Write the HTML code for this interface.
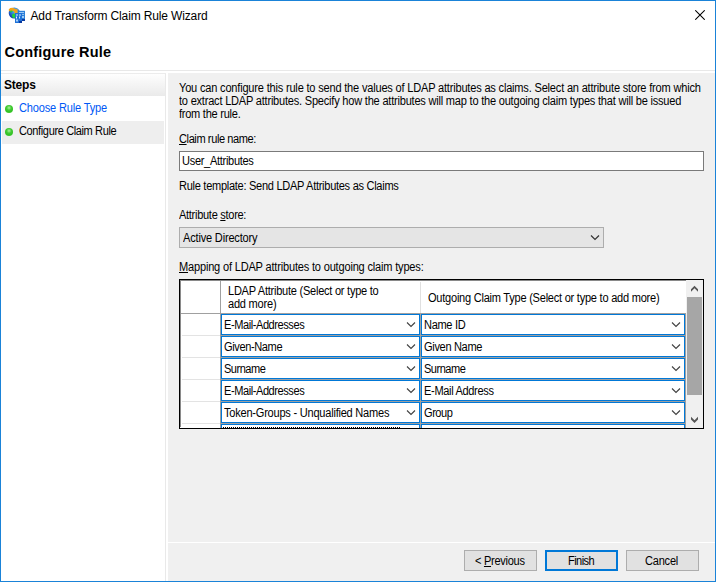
<!DOCTYPE html>
<html><head><meta charset="utf-8">
<style>
*{box-sizing:border-box;margin:0;padding:0}
html,body{width:716px;height:582px;overflow:hidden;background:#fff}
body{position:relative;font-family:"Liberation Sans",sans-serif;font-size:11.5px;color:#000;letter-spacing:-0.45px}
.a{position:absolute}
.t{position:absolute;white-space:nowrap;line-height:13px;height:13px;font-size:12px;transform:scaleX(0.92);transform-origin:0 0}
.t.n{transform:none}
.u{text-decoration:underline;text-underline-offset:1px}
#win{position:absolute;left:0;top:0;width:716px;height:582px;border:1px solid #1a83d8}
#sep1{left:1px;top:70px;width:714px;height:1px;background:#e8e8e8}
#left{left:1px;top:73px;width:165px;height:508px;background:#fff;border-right:1px solid #e9e9e9;border-top:1px solid #ececec}
#stepsh{left:1px;top:74px;width:164px;height:22px;background:linear-gradient(#fefefe,#f5f5f5 45%,#eaeaea)}
#hl{left:2px;top:121px;width:162px;height:23px;background:#eeeeee}
.dot{position:absolute;width:8px;height:8px;border-radius:50%;background:radial-gradient(circle at 50% 35%,#b0f0a0 0,#44cc36 35%,#34c026 60%,#40d030 85%,#56dc46 100%)}
#right{left:168px;top:73px;width:547px;height:469px;background:#f0f0f0}
#sep2{left:168px;top:542px;width:547px;height:1px;background:#fff}
#bottom{left:168px;top:543px;width:547px;height:38px;background:#f0f0f0}
.tb{position:absolute;background:#fff;border:1px solid #7a7a7a}
.dd{position:absolute;background:#e5e5e5;border:1px solid #adadad}
.btn{position:absolute;background:#e1e1e1;border:1px solid #adadad;height:21px;width:73px}
.btn.def{border:2px solid #0078d7}
.chev{position:absolute}
#grid{left:179px;top:279px;width:525px;height:150px;background:#fff}
#gridb{left:179px;top:279px;width:525px;height:150px;border:1px solid #000}
#gridi{left:180px;top:280px;width:506px;height:147px;border-left:1px solid #8a8a8a;border-top:1px solid #8a8a8a}
.cb{position:absolute;background:#fff;border:1px solid #0078d7;height:21px}
.gl{position:absolute;background:#a0a0a0}
</style></head><body>
<div id="win"></div>
<!-- title bar -->
<svg class="a" style="left:7px;top:5px" width="20" height="20" viewBox="0 0 20 20">
  <defs><radialGradient id="gl" cx="0.55" cy="0.3" r="0.75"><stop offset="0" stop-color="#5cc4f5"/><stop offset="0.5" stop-color="#2a78d8"/><stop offset="1" stop-color="#0a2aa0"/></radialGradient></defs>
  <circle cx="7.3" cy="8" r="5.6" fill="url(#gl)"/>
  <ellipse cx="7" cy="10.8" rx="2" ry="2.2" fill="#1ed23c"/>
  <ellipse cx="4.3" cy="6" rx="1.3" ry="1.2" fill="#2ccd3c"/>
  <path d="M1.8 4.2 Q3.5 2.6 6 2.9 Q8 3.3 9 4.6 L10.4 3.6 L10.6 8.6 L6.6 8.4 L7.8 7.3 Q6.5 5.8 4.6 5.6 Q3 5.6 1.9 6.6 Z" fill="#f4a417"/>
  <rect x="11" y="5.8" width="7" height="10.2" fill="#2b7fd8"/>
  <rect x="12" y="7" width="5" height="1" fill="#9cc8f5"/>
  <rect x="14" y="9" width="3" height="1" fill="#8fc0f0"/>
  <rect x="15" y="11" width="2" height="2" fill="#9ccaf5"/>
  <rect x="15" y="14" width="3" height="2" fill="#0a3aa0"/>
  <rect x="8" y="8" width="7" height="10" fill="#1f72d8"/>
  <rect x="9" y="9.5" width="2" height="1" fill="#d8ecff"/><rect x="12" y="9.5" width="2" height="1" fill="#d8ecff"/>
  <rect x="9" y="11.5" width="1" height="2" fill="#e8f4ff"/><rect x="12" y="11.5" width="1" height="2" fill="#c8e2ff"/>
  <rect x="9" y="14.5" width="2" height="2" fill="#a8d0f8"/>
  <rect x="12" y="16" width="3" height="2" fill="#0a3aa0"/>
</svg>
<div class="t n" style="left:30.5px;top:10px;font-size:12px;letter-spacing:-0.14px">Add Transform Claim Rule Wizard</div>
<svg class="a" style="left:695px;top:10px" width="10" height="10" viewBox="0 0 10 10"><path d="M0.3 0.3 L9.7 9.7 M9.7 0.3 L0.3 9.7" stroke="#000" stroke-width="1.05"/></svg>
<div class="t n" style="left:4.5px;top:44px;font-size:14.5px;font-weight:bold;letter-spacing:0.2px;line-height:17px;height:17px">Configure Rule</div>
<div class="a" id="sep1"></div>

<!-- left pane -->
<div class="a" id="left"></div>
<div class="a" id="stepsh"></div>
<div class="t n" style="left:4px;top:79px;font-size:12px;font-weight:bold;letter-spacing:-0.2px">Steps</div>
<div class="dot" style="left:5px;top:105px"></div>
<div class="t" style="left:18.7px;top:102px;color:#0058f5;letter-spacing:-0.18px">Choose Rule Type</div>
<div class="a" id="hl"></div>
<div class="dot" style="left:5px;top:128px"></div>
<div class="t" style="left:18.7px;top:125px;letter-spacing:-0.414px">Configure Claim Rule</div>

<!-- right pane -->
<div class="a" id="right"></div>
<div class="a" id="sep2"></div>
<div class="a" id="bottom"></div>

<div class="t" style="left:179px;top:82px;letter-spacing:-0.206px">You can configure this rule to send the values of LDAP attributes as claims. Select an attribute store from which</div>
<div class="t" style="left:179px;top:95px;letter-spacing:-0.231px">to extract LDAP attributes. Specify how the attributes will map to the outgoing claim types that will be issued</div>
<div class="t" style="left:179px;top:108px;letter-spacing:-0.279px">from the rule.</div>

<div class="t" style="left:179px;top:133px;letter-spacing:-0.437px"><span class="u">C</span>laim rule name:</div>
<div class="tb" style="left:179px;top:151px;width:525px;height:20px"></div>
<div class="t" style="left:181.9px;top:155px;letter-spacing:-0.33px">User_Attributes</div>

<div class="t" style="left:179px;top:180px;letter-spacing:-0.31px">Rule template: Send LDAP Attributes as Claims</div>

<div class="t" style="left:179px;top:209px;letter-spacing:-0.317px">Attribute <span class="u">s</span>tore:</div>
<div class="dd" style="left:179px;top:227px;width:425px;height:21px"></div>
<div class="t" style="left:182.6px;top:232px;letter-spacing:-0.2px">Active Directory</div>
<svg class="a" style="left:590px;top:234px" width="10" height="7" viewBox="0 0 10 7"><path d="M1 1.5 L5 5.5 L9 1.5" fill="none" stroke="#333" stroke-width="1.2"/></svg>

<div class="t" style="left:179px;top:261px;letter-spacing:-0.199px"><span class="u">M</span>apping of LDAP attributes to outgoing claim types:</div>

<!-- grid -->
<div class="a" id="grid"></div>
<div class="gl" style="left:220px;top:280px;width:1px;height:148px"></div>
<div class="a" style="left:420px;top:282px;width:1px;height:31px;background:#e0e0e0"></div>
<div class="gl" style="left:180px;top:313px;width:506px;height:1px"></div>
<div class="t" style="left:228px;top:285px;letter-spacing:-0.272px">LDAP Attribute (Select or type to</div>
<div class="t" style="left:228px;top:298px;letter-spacing:-0.236px">add more)</div>
<div class="t" style="left:428px;top:292px;letter-spacing:-0.26px">Outgoing Claim Type (Select or type to add more)</div>

<div class="a" style="left:0;top:0;width:716px;height:428px;overflow:hidden">
<div class="cb" style="left:221px;top:314px;width:199px"></div>
<div class="cb" style="left:421px;top:314px;width:264px"></div>
<div class="gl" style="left:220px;top:335px;width:466px;height:1px"></div>
<div class="a" style="left:182px;top:335px;width:38px;height:1px;background:#e3e3e3"></div>
<div class="t" style="left:224px;top:319px;letter-spacing:-0.466px">E-Mail-Addresses</div>
<div class="t" style="left:424px;top:319px;letter-spacing:-0.345px">Name ID</div>
<svg class="chev" style="left:406px;top:322px" width="10" height="6" viewBox="0 0 10 6"><path d="M1 0.5 L5 4.5 L9 0.5" fill="none" stroke="#404040" stroke-width="1.1"/></svg>
<svg class="chev" style="left:671px;top:322px" width="10" height="6" viewBox="0 0 10 6"><path d="M1 0.5 L5 4.5 L9 0.5" fill="none" stroke="#404040" stroke-width="1.1"/></svg>
<div class="cb" style="left:221px;top:336px;width:199px"></div>
<div class="cb" style="left:421px;top:336px;width:264px"></div>
<div class="gl" style="left:220px;top:357px;width:466px;height:1px"></div>
<div class="a" style="left:182px;top:357px;width:38px;height:1px;background:#e3e3e3"></div>
<div class="t" style="left:224px;top:341px;letter-spacing:-0.414px">Given-Name</div>
<div class="t" style="left:424px;top:341px;letter-spacing:-0.352px">Given Name</div>
<svg class="chev" style="left:406px;top:344px" width="10" height="6" viewBox="0 0 10 6"><path d="M1 0.5 L5 4.5 L9 0.5" fill="none" stroke="#404040" stroke-width="1.1"/></svg>
<svg class="chev" style="left:671px;top:344px" width="10" height="6" viewBox="0 0 10 6"><path d="M1 0.5 L5 4.5 L9 0.5" fill="none" stroke="#404040" stroke-width="1.1"/></svg>
<div class="cb" style="left:221px;top:358px;width:199px"></div>
<div class="cb" style="left:421px;top:358px;width:264px"></div>
<div class="gl" style="left:220px;top:379px;width:466px;height:1px"></div>
<div class="a" style="left:182px;top:379px;width:38px;height:1px;background:#e3e3e3"></div>
<div class="t" style="left:224px;top:363px;letter-spacing:-0.543px">Surname</div>
<div class="t" style="left:424px;top:363px;letter-spacing:-0.543px">Surname</div>
<svg class="chev" style="left:406px;top:366px" width="10" height="6" viewBox="0 0 10 6"><path d="M1 0.5 L5 4.5 L9 0.5" fill="none" stroke="#404040" stroke-width="1.1"/></svg>
<svg class="chev" style="left:671px;top:366px" width="10" height="6" viewBox="0 0 10 6"><path d="M1 0.5 L5 4.5 L9 0.5" fill="none" stroke="#404040" stroke-width="1.1"/></svg>
<div class="cb" style="left:221px;top:380px;width:199px"></div>
<div class="cb" style="left:421px;top:380px;width:264px"></div>
<div class="gl" style="left:220px;top:401px;width:466px;height:1px"></div>
<div class="a" style="left:182px;top:401px;width:38px;height:1px;background:#e3e3e3"></div>
<div class="t" style="left:224px;top:385px;letter-spacing:-0.466px">E-Mail-Addresses</div>
<div class="t" style="left:424px;top:385px;letter-spacing:-0.357px">E-Mail Address</div>
<svg class="chev" style="left:406px;top:388px" width="10" height="6" viewBox="0 0 10 6"><path d="M1 0.5 L5 4.5 L9 0.5" fill="none" stroke="#404040" stroke-width="1.1"/></svg>
<svg class="chev" style="left:671px;top:388px" width="10" height="6" viewBox="0 0 10 6"><path d="M1 0.5 L5 4.5 L9 0.5" fill="none" stroke="#404040" stroke-width="1.1"/></svg>
<div class="cb" style="left:221px;top:402px;width:199px"></div>
<div class="cb" style="left:421px;top:402px;width:264px"></div>
<div class="gl" style="left:220px;top:423px;width:466px;height:1px"></div>
<div class="a" style="left:182px;top:423px;width:38px;height:1px;background:#e3e3e3"></div>
<div class="t" style="left:224px;top:407px;letter-spacing:-0.245px">Token-Groups - Unqualified Names</div>
<div class="t" style="left:424px;top:407px;letter-spacing:-0.494px">Group</div>
<svg class="chev" style="left:406px;top:410px" width="10" height="6" viewBox="0 0 10 6"><path d="M1 0.5 L5 4.5 L9 0.5" fill="none" stroke="#404040" stroke-width="1.1"/></svg>
<svg class="chev" style="left:671px;top:410px" width="10" height="6" viewBox="0 0 10 6"><path d="M1 0.5 L5 4.5 L9 0.5" fill="none" stroke="#404040" stroke-width="1.1"/></svg>
<div class="cb" style="left:221px;top:424px;width:199px"></div>
<div class="cb" style="left:421px;top:424px;width:264px"></div>
<div class="gl" style="left:220px;top:445px;width:466px;height:1px"></div>
<div class="a" style="left:182px;top:445px;width:38px;height:1px;background:#e3e3e3"></div>

</div>
<div class="gl" style="left:420px;top:313px;width:1px;height:115px"></div>
<div class="gl" style="left:685px;top:313px;width:1px;height:115px"></div>
<div class="a" style="left:223px;top:427px;width:178px;height:1px;background:repeating-linear-gradient(90deg,#000 0 1px,#fff 1px 2px)"></div>
<!-- scrollbar -->
<div class="a" style="left:686px;top:280px;width:17px;height:148px;background:#f0f0f0"></div>
<div class="a" style="left:687px;top:297px;width:15px;height:98px;background:#a6a6a6"></div>
<svg class="a" style="left:690px;top:285px" width="10" height="8" viewBox="0 0 10 8"><polygon points="1,4.2 4.5,0.7 8,4.2 8,6.8 4.5,3.3 1,6.8" fill="#555"/></svg>
<svg class="a" style="left:690px;top:416px" width="10" height="8" viewBox="0 0 10 8"><polygon points="1,0.8 4.5,4.3 8,0.8 8,3.4 4.5,6.9 1,3.4" fill="#555"/></svg>

<div class="a" id="gridi"></div>
<div class="a" id="gridb"></div>
<!-- buttons -->
<div class="btn" style="left:464px;top:550px"></div>
<div class="t" style="left:475px;top:555px;letter-spacing:-0.306px">&lt; <span class="u">P</span>revious</div>
<div class="btn def" style="left:545px;top:550px"></div>
<div class="t" style="left:568px;top:555px;letter-spacing:-0.6px">Finish</div>
<div class="btn" style="left:626px;top:550px"></div>
<div class="t" style="left:645px;top:555px;letter-spacing:-0.228px">Cancel</div>

</body></html>
